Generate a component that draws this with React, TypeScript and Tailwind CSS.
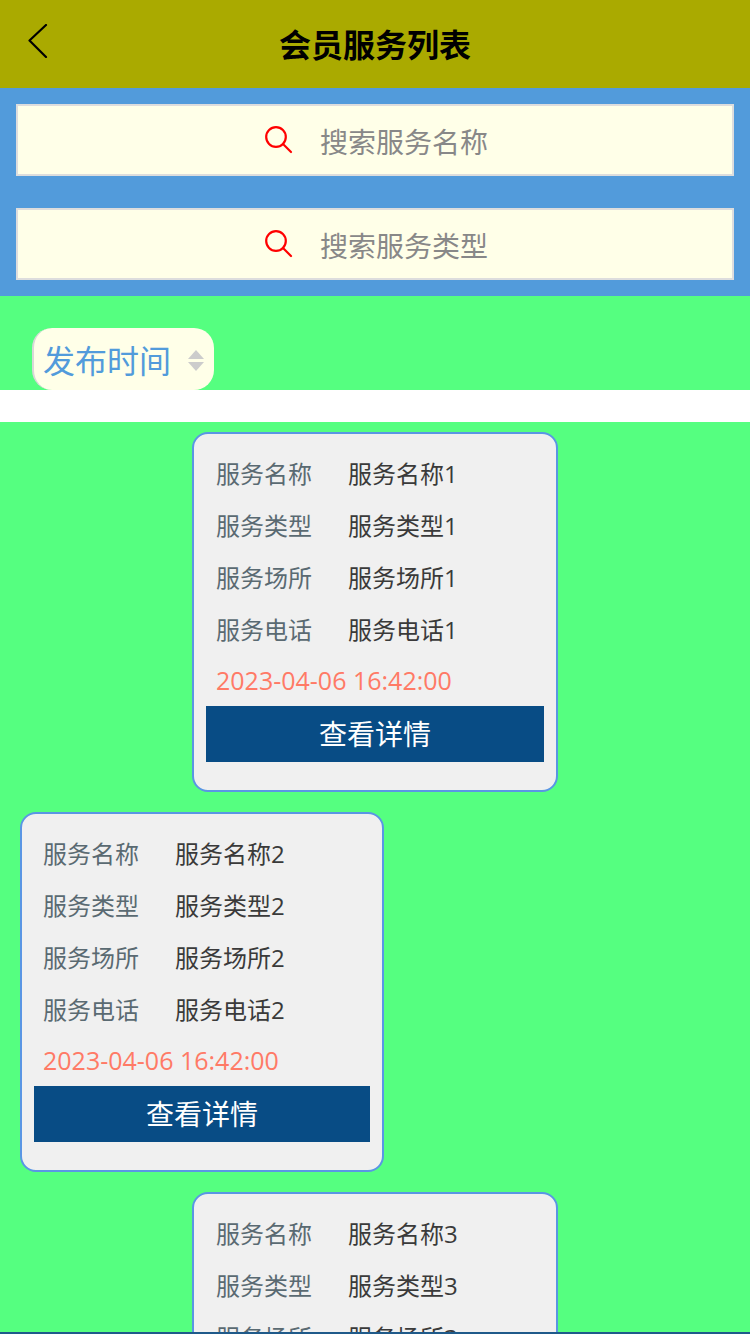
const services = [
  { id: 1, box: "w-[366px] self-center", inset: "pl-[10px]" },
  { id: 2, box: "ml-5 w-[364px] self-start", inset: "pl-[9px]" },
  { id: 3, box: "w-[366px] self-center", inset: "pl-[10px]" },
]

function SearchBox({ placeholder }: { placeholder: string }) {
  return (
    <div className="flex h-[72px] items-center justify-center border-2 border-[#dddddd] bg-[#ffffe8] pl-[3px]">
      <svg width="28" height="28" viewBox="0 0 28 28" fill="none" stroke="#ff0000" strokeWidth="2.2">
        <circle cx="11" cy="11" r="9.8" />
        <path d="M18 18l8 8" strokeLinecap="round" />
      </svg>
      <span className="ml-[27px] pt-1 text-[28px] text-[#888888]">{placeholder}</span>
    </div>
  )
}

function ServiceCard({ id, box, inset }: { id: number; box: string; inset: string }) {
  const rows = ["服务名称", "服务类型", "服务场所", "服务电话"]
  return (
    <div className={`h-[360px] shrink-0 rounded-[16px] border-2 border-[#5a96e4] bg-[#f0f0f0] px-3 pt-[14px] ${box}`}>
      {rows.map((row) => (
        <div key={row} className={`flex h-[52px] items-center text-[24px] ${inset}`}>
          <span className="w-[132px] text-[#5a6a72]">{row}</span>
          <span className="text-[#3a3a3a]">{row + id}</span>
        </div>
      ))}
      <div className={`flex h-[50px] items-center text-[25px] text-[#ff7a66] ${inset}`}>2023-04-06 16:42:00</div>
      <div className="flex h-[56px] items-center justify-center bg-[#084c85] text-[28px] text-white">查看详情</div>
    </div>
  )
}

export default function App() {
  return (
    <div className="relative h-[1334px] w-[750px] overflow-hidden bg-[#55ff80] font-['Open_Sans','Noto_Sans_CJK_SC',sans-serif]">
      <header className="relative flex h-[88px] items-center justify-center bg-[#aaaa00]">
        <svg className="absolute left-[28px] top-[24px]" width="20" height="34" viewBox="0 0 20 34" fill="none" stroke="#000000" strokeWidth="2.2" strokeLinecap="round" strokeLinejoin="round">
          <path d="M18 1L1.5 16.5L18 33" />
        </svg>
        <h1 className="pt-[2px] text-[32px] font-bold text-black">会员服务列表</h1>
      </header>

      <div className="flex flex-col gap-8 bg-[#529bdb] p-4">
        <SearchBox placeholder="搜索服务名称" />
        <SearchBox placeholder="搜索服务类型" />
      </div>

      <div className="h-[94px] pl-8 pt-8">
        <div className="flex h-[62px] w-[182px] items-center rounded-[20px] border-l-2 border-[#d8d8d8] bg-[#ffffe8] pl-[9px]">
          <span className="pt-1 text-[32px] text-[#529bdb]">发布时间</span>
          <span className="ml-[17px] flex flex-col gap-[3px] pt-[2px]">
            <span className="h-0 w-0 border-x-[8px] border-b-[9px] border-x-transparent border-b-[#cccccc]" />
            <span className="h-0 w-0 border-x-[8px] border-t-[9px] border-x-transparent border-t-[#cccccc]" />
          </span>
        </div>
      </div>

      <div className="h-8 bg-white" />

      <div className="flex flex-col gap-5 pt-[10px]">
        {services.map((s) => (
          <ServiceCard key={s.id} id={s.id} box={s.box} inset={s.inset} />
        ))}
      </div>

      <div className="absolute inset-x-0 bottom-0 h-[2px] bg-[#1f5a8a]" />
    </div>
  )
}
